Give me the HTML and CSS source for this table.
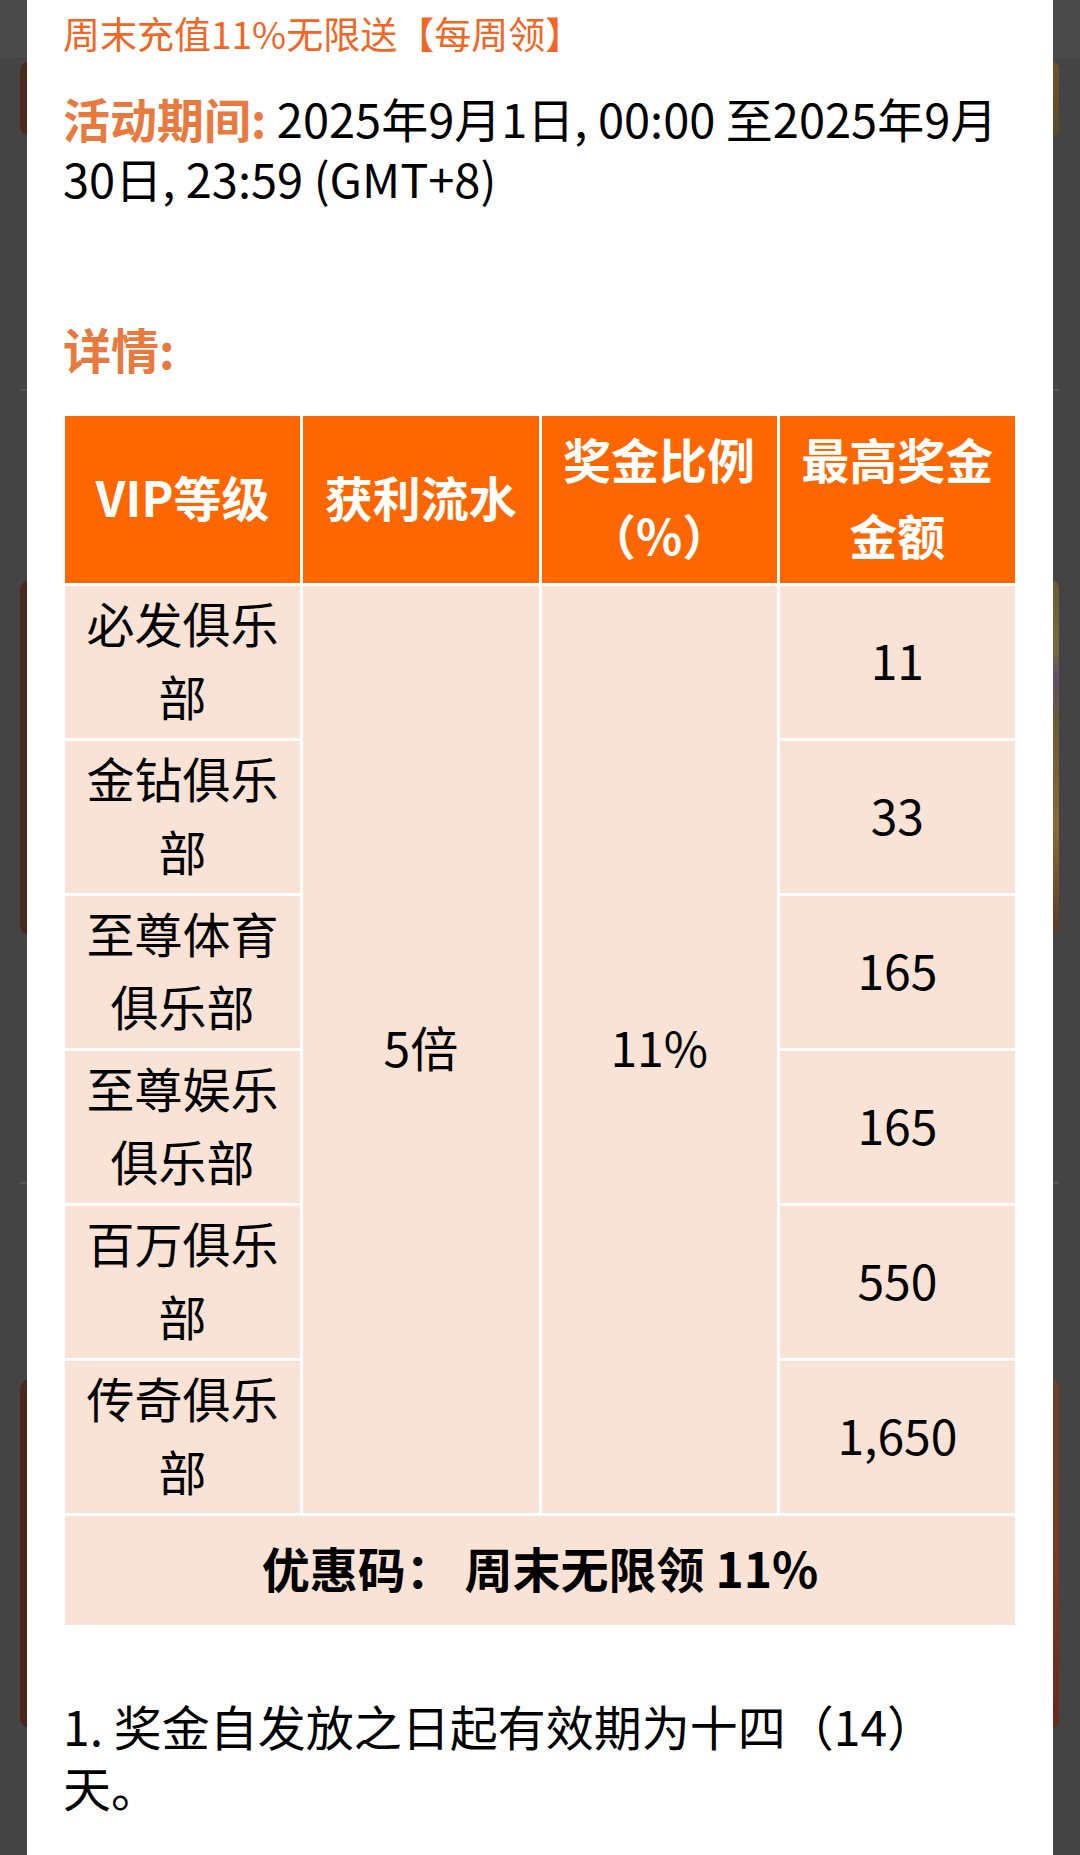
FILE: index.html
```html
<!DOCTYPE html>
<html lang="zh-CN">
<head>
<meta charset="utf-8">
<title>周末充值11%无限送</title>
<link rel="stylesheet" href="styles.css">
</head>
<body>
<div class="backdrop" aria-hidden="true">
  <div class="bd-top"></div>
  <div class="bd-card bd-card-1"></div>
  <div class="bd-line bd-line-1"></div>
  <div class="bd-card bd-card-2"></div>
  <div class="bd-line bd-line-2"></div>
  <div class="bd-card bd-card-3"></div>
</div>
<main class="modal">
  <div class="title">周末充值11%无限送【每周领】</div>
  <p class="period"><span class="label">活动期间:</span> 2025年9月1日, 00:00 至2025年9月30日, 23:59 (GMT+8)</p>
  <h3 class="label details">详情:</h3>
  <table class="rules">
    <colgroup><col><col><col><col></colgroup>
    <thead>
      <tr>
        <th>VIP等级</th>
        <th>获利流水</th>
        <th>奖金比例（%）</th>
        <th>最高奖金金额</th>
      </tr>
    </thead>
    <tbody>
      <tr>
        <td>必发俱乐部</td>
        <td rowspan="6">5倍</td>
        <td rowspan="6">11%</td>
        <td>11</td>
      </tr>
      <tr><td>金钻俱乐部</td><td>33</td></tr>
      <tr><td>至尊体育俱乐部</td><td>165</td></tr>
      <tr><td>至尊娱乐俱乐部</td><td>165</td></tr>
      <tr><td>百万俱乐部</td><td>550</td></tr>
      <tr><td>传奇俱乐部</td><td>1,650</td></tr>
    </tbody>
    <tfoot>
      <tr><td colspan="4" class="code">优惠码： 周末无限领 11%</td></tr>
    </tfoot>
  </table>
  <p class="note">1. 奖金自发放之日起有效期为十四（14）天。</p>
</main>
</body>
</html>
```

FILE: styles.css
```css
html, body {
  margin: 0;
  padding: 0;
}

body {
  background: #444444;
  font-family: "Noto Sans CJK SC", "Noto Sans", sans-serif;
  color: #000;
  min-height: 1855px;
  position: relative;
  overflow: hidden;
}

/* dimmed page behind the modal */
.backdrop {
  position: absolute;
  inset: 0;
  z-index: 0;
}

.bd-top {
  position: absolute;
  left: 0;
  right: 0;
  top: 0;
  height: 58px;
  background: #4a4a4a;
}

.bd-card {
  position: absolute;
  left: 20px;
  width: 1039px;
  border-radius: 10px;
}

.bd-card-1 {
  top: 61px;
  height: 75px;
  background: linear-gradient(90deg, #4b2a1d 0%, #4b2a1d 50%, #6a5030 100%);
}

.bd-card-2 {
  top: 580px;
  height: 355px;
  background: #4a2a1c;
}

.bd-card-1::after,
.bd-card-2::after,
.bd-card-3::after {
  content: "";
  position: absolute;
  right: 0;
  top: 0;
  bottom: 0;
  width: 8px;
  border-radius: 0 10px 10px 0;
}

.bd-card-1::after {
  background: linear-gradient(180deg, #6b5428, #5a4a2a);
}

.bd-card-2::after {
  background: linear-gradient(180deg, #6a5a34 0%, #7a6a40 20%, #5c4f6a 28%, #6a5a34 40%, #8a6a3a 70%, #5a3a24 100%);
}

.bd-card-3 {
  top: 1379px;
  height: 349px;
  background: #4a261b;
}

.bd-card-3::after {
  background: linear-gradient(180deg, #6a3f26 0%, #7a3a22 50%, #6a2a1c 100%);
}

.bd-line {
  position: absolute;
  left: 20px;
  width: 1039px;
  height: 2px;
  background: #555555;
}

.bd-line-1 { top: 389px; }
.bd-line-2 { top: 1182px; }

/* modal panel */
.modal {
  position: relative;
  z-index: 1;
  margin: 0 27px;
  min-height: 1855px;
  background: #ffffff;
  padding: 11px 36px 0;
  box-sizing: border-box;
}

.title {
  font-size: 37px;
  line-height: 44px;
  color: #f26522;
}

.period {
  margin: 33px 0 0;
  font-size: 47px;
  line-height: 60px;
}

.label {
  color: #e97a3f;
  font-weight: 700;
}

.details {
  margin: 110px 0 0;
  font-size: 48px;
  line-height: 60px;
}

.rules {
  margin: 35px -1px 0;
  width: calc(100% + 2px);
  border-collapse: separate;
  border-spacing: 3px;
  table-layout: fixed;
  font-size: 48px;
  text-align: center;
}

.rules col {
  width: 25%;
}

.rules th {
  background: #fe6700;
  color: #ffffff;
  font-weight: 700;
  line-height: 76px;
  padding: 4px 10px 11px;
  vertical-align: middle;
}

.rules td {
  background: #f9e2d6;
  line-height: 73px;
  padding: 0 10px 6px;
  height: 152px;
  box-sizing: border-box;
  vertical-align: middle;
}

.rules tfoot td.code {
  height: 109px;
  line-height: 76px;
  padding: 13px 10px 20px;
  font-weight: 700;
}

.note {
  margin: 67px 0 0;
  max-width: 880px;
  font-size: 48px;
  line-height: 61px;
}
```
